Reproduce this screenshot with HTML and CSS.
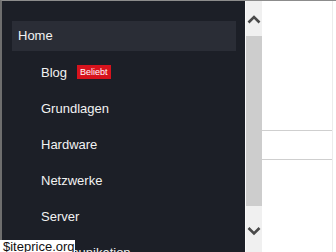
FILE: index.html
```html
<!DOCTYPE html>
<html>
	<head>
		<meta charset="utf-8">
		<title>Menü</title>
		<link rel="stylesheet" href="styles.css">
	</head>
	<body>
		<div class="frame">
			<div class="menu">
				<ul>
					<li class="top"><a href="#">Home</a></li>
					<li class="sub"><a href="#">Blog</a><span class="badge">Beliebt</span></li>
					<li class="sub"><a href="#">Grundlagen</a></li>
					<li class="sub"><a href="#">Hardware</a></li>
					<li class="sub"><a href="#">Netzwerke</a></li>
					<li class="sub"><a href="#">Server</a></li>
					<li class="sub"><a href="#">Kommunikation</a></li>
				</ul>
			</div>
			<div class="scrollbar">
				<div class="arrow">
					<svg width="16" height="12" viewBox="0 0 16 12"><path d="M2.5 9.5 L8 4 L13.5 9.5" fill="none" stroke="#4a4a4a" stroke-width="2.6"/></svg>
				</div>
				<div class="thumb"></div>
				<div class="arrow">
					<svg width="16" height="12" viewBox="0 0 16 12"><path d="M2.5 3 L8 8.5 L13.5 3" fill="none" stroke="#4a4a4a" stroke-width="2.6"/></svg>
				</div>
			</div>
			<div class="content">
				<div class="line first"></div>
				<div class="line"></div>
			</div>
		</div>
		<div class="stamp">$iteprice.org</div>
	</body>
</html>
```

FILE: styles.css
```css
*{
	margin:0;
	padding:0;
}
body{
	background:#fff;
	font-family:"Liberation Sans", Arial, sans-serif;
	height:252px;
	overflow:hidden;
}
.frame{
	display:flex;
	height:251px;
	border-top:1px solid #8c8c8c;
	border-left:2px solid #6e6e6e;
	overflow:hidden;
}
.menu{
	width:243px;
	flex-shrink:0;
	background:#1c1f27;
	padding:17px 9px 0 10px;
	box-sizing:border-box;
}
.menu ul{
	list-style:none;
}
.menu li{
	height:36px;
	display:flex;
	align-items:center;
	font-size:13px;
}
.menu a{
	color:#f2f2f2;
	text-decoration:none;
}
.menu .top{
	padding:3px 0;
	box-sizing:border-box;
}
.menu .top a{
	display:block;
	width:100%;
	height:30px;
	line-height:30px;
	padding-left:6px;
	background:#2a2d36;
}
.menu .sub{
	padding-left:29px;
}
.badge{
	background:#d7131d;
	color:#fff;
	font-size:9px;
	line-height:14px;
	padding:0 3px;
	margin-left:10px;
	margin-top:-1px;
}
.scrollbar{
	width:16px;
	flex-shrink:0;
	background:#f0f0f0;
	border-left:1px solid #fafafa;
	display:flex;
	flex-direction:column;
}
.scrollbar .arrow{
	height:35px;
	display:flex;
	align-items:center;
	justify-content:center;
}
.scrollbar .arrow:last-child{
	height:auto;
	flex:1;
	align-items:flex-start;
	padding-top:19px;
}
.scrollbar .thumb{
	height:170px;
	background:#cdcdcd;
}
.content{
	flex:1;
	background:#fff;
	border-right:1px solid #ececec;
	margin-right:3px;
}
.content .line{
	height:28px;
	border-bottom:1px solid #cfcfcf;
}
.content .line.first{
	height:129px;
}
.stamp{
	position:absolute;
	left:0;
	top:240px;
	width:72px;
	height:12px;
	padding-left:3px;
	background:#fff;
	color:#111;
	font-size:13px;
	line-height:13px;
	overflow:hidden;
}
```
